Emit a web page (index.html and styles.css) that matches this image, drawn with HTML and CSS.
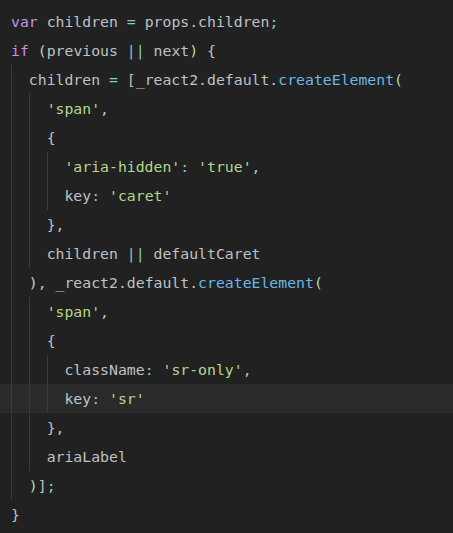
FILE: index.html
```html
<!DOCTYPE html>
<html>
<head>
<meta charset="utf-8">
<link rel="stylesheet" href="styles.css">
</head>
<body>
<div class="editor">
<div class="ln"><span class="kw">var</span> children <span class="op">=</span> props.children<span class="op">;</span></div>
<div class="ln"><span class="kw">if</span> <span class="pr">(</span>previous <span class="op">||</span> next<span class="pr">)</span> {</div>
<div class="ln"><span class="ig"></span>children <span class="op">=</span> [_react2.default.<span class="fn">createElement</span><span class="pr">(</span></div>
<div class="ln"><span class="ig"></span><span class="ig"></span><span class="st">'span'</span>,</div>
<div class="ln"><span class="ig"></span><span class="ig"></span>{</div>
<div class="ln"><span class="ig"></span><span class="ig"></span><span class="ig"></span><span class="st">'aria-hidden'</span><span class="op">:</span> <span class="st">'true'</span>,</div>
<div class="ln"><span class="ig"></span><span class="ig"></span><span class="ig"></span>key<span class="op">:</span> <span class="st">'caret'</span></div>
<div class="ln"><span class="ig"></span><span class="ig"></span>},</div>
<div class="ln"><span class="ig"></span><span class="ig"></span>children <span class="op">||</span> defaultCaret</div>
<div class="ln"><span class="ig"></span><span class="pr">)</span>, _react2.default.<span class="fn">createElement</span><span class="pr">(</span></div>
<div class="ln"><span class="ig"></span><span class="ig"></span><span class="st">'span'</span>,</div>
<div class="ln"><span class="ig"></span><span class="ig"></span>{</div>
<div class="ln"><span class="ig"></span><span class="ig"></span><span class="ig"></span>className<span class="op">:</span> <span class="st">'sr-only'</span>,</div>
<div class="ln cur"><span class="ig"></span><span class="ig"></span><span class="ig"></span>key<span class="op">:</span> <span class="st">'sr'</span></div>
<div class="ln"><span class="ig"></span><span class="ig"></span>},</div>
<div class="ln"><span class="ig"></span><span class="ig"></span>ariaLabel</div>
<div class="ln"><span class="ig"></span><span class="pr">)</span>]<span class="op">;</span></div>
<div class="ln">}</div>
</div>
</body>
</html>
```

FILE: styles.css
```css
html, body {
  margin: 0;
  padding: 0;
  background: #212121;
}
.editor {
  padding-top: 7px;
  font-family: "DejaVu Sans Mono", monospace;
  font-size: 14.8px;
  color: #bcc2c6;
}
.ln {
  height: 29px;
  line-height: 29px;
  padding-left: 11px;
  white-space: pre;
}
.ln.cur {
  background: #2a2a2a;
}
.ig {
  display: inline-block;
  width: 2ch;
  height: 29px;
  vertical-align: top;
  box-sizing: border-box;
  border-left: 1px solid #3a3a3a;
}
.kw { color: #c792ea; }
.op { color: #80cbc4; }
.st { color: #b5d88a; }
.fn { color: #6ab7e6; }
.pr { color: #b4dcb4; }
```
